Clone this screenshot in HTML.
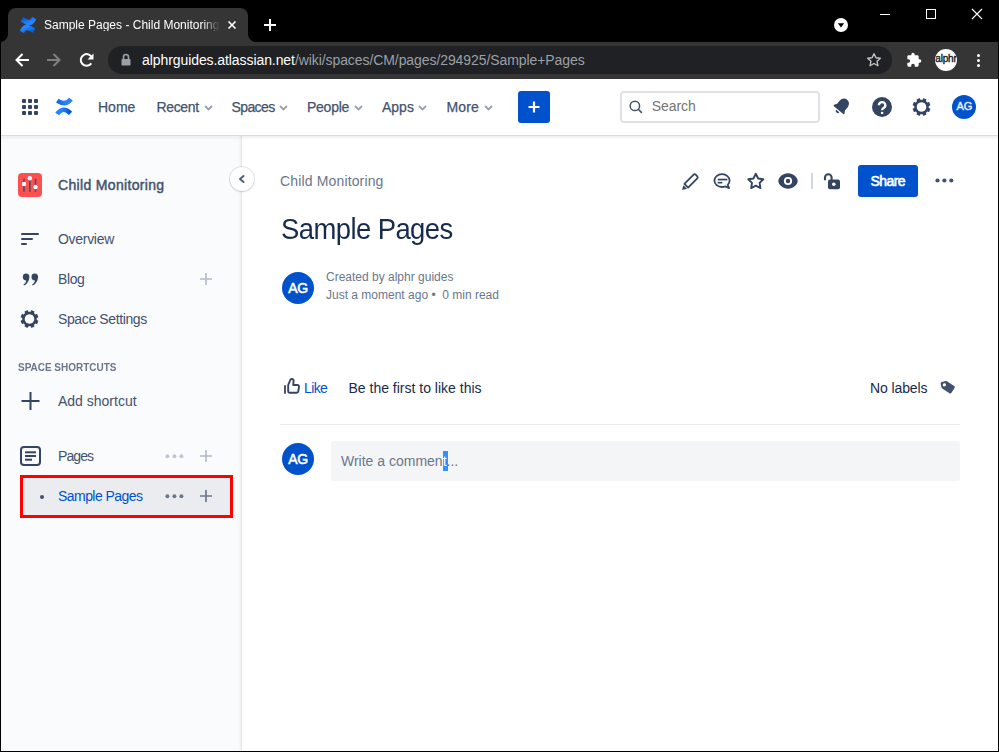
<!DOCTYPE html>
<html><head><meta charset="utf-8">
<style>
*{box-sizing:border-box}
html,body{margin:0;padding:0}
body{width:999px;height:752px;overflow:hidden;position:relative;background:#000;font-family:"Liberation Sans",sans-serif}
.a{position:absolute}
.t{position:absolute;line-height:1;white-space:nowrap}
svg{position:absolute;overflow:visible}
</style></head><body>
<!-- ===== Browser chrome ===== -->
<div class="a" style="left:0;top:0;width:999px;height:42px;background:#000"></div>
<!-- tab -->
<div class="a" style="left:8px;top:8px;width:240px;height:36px;background:#353535;border-radius:8px 8px 0 0"></div>
<svg style="left:0;top:34px" width="8" height="8"><path d="M0 8 A8 8 0 0 0 8 0 L8 8 Z" fill="#353535"/></svg>
<svg style="left:248px;top:34px" width="8" height="8"><path d="M0 0 A8 8 0 0 0 8 8 L0 8 Z" fill="#353535"/></svg>
<!-- favicon -->
<svg style="left:20px;top:17px" width="16" height="16" viewBox="5.1 6.2 21.8 19.6" preserveAspectRatio="none">
<defs><linearGradient x1="99.14%" x2="33.86%" y1="112.7%" y2="37.75%" id="lg1"><stop stop-color="#0052CC" offset="18%"/><stop stop-color="#2684FF" offset="100%"/></linearGradient>
<linearGradient x1="0.93%" x2="66.18%" y1="-12.58%" y2="62.31%" id="lg2"><stop stop-color="#0052CC" offset="18%"/><stop stop-color="#2684FF" offset="100%"/></linearGradient></defs>
<path id="cfl1" d="M5.9,21.2c-0.2,0.4-0.5,0.8-0.7,1.1c-0.2,0.3-0.1,0.7,0.2,0.9l4.4,2.7c0.3,0.2,0.7,0.1,0.9-0.2c0.2-0.3,0.4-0.7,0.7-1.1c1.8-2.9,3.5-2.6,6.7-1.1l4.4,2.1c0.3,0.2,0.7,0,0.9-0.3l2.1-4.8c0.1-0.3,0-0.7-0.3-0.9c-0.9-0.4-2.8-1.3-4.4-2.1C15,14.4,9.8,14.6,5.9,21.2z" fill="url(#lg1)"/>
<path id="cfl2" d="M26.1,10.8c0.2-0.4,0.5-0.8,0.7-1.1c0.2-0.3,0.1-0.7-0.2-0.9l-4.4-2.7c-0.3-0.2-0.7-0.1-0.9,0.2c-0.2,0.3-0.4,0.7-0.7,1.1c-1.8,2.9-3.5,2.6-6.7,1.1L9.5,6.4C9.2,6.3,8.8,6.4,8.6,6.7L6.5,11.5c-0.1,0.3,0,0.7,0.3,0.9c0.9,0.4,2.8,1.3,4.4,2.1C17,17.6,22.2,17.4,26.1,10.8z" fill="url(#lg2)"/>
</svg>
<div class="t" style="left:44px;top:19.1px;font-size:12px;color:#fff;width:176px;overflow:hidden;-webkit-mask-image:linear-gradient(to right,#000 158px,transparent 176px)">Sample Pages - Child Monitoring</div>
<svg style="left:228px;top:21px" width="8" height="8"><path d="M0.5 0.5L7.5 7.5M7.5 0.5L0.5 7.5" stroke="#fff" stroke-width="1.6"/></svg>
<svg style="left:264px;top:19px" width="12" height="12"><path d="M6 0V12M0 6H12" stroke="#fff" stroke-width="2"/></svg>
<!-- window controls -->
<svg style="left:834px;top:18px" width="14" height="14"><circle cx="7" cy="7" r="7" fill="#fff"/><path d="M3.8 5.3H10.2L7 9.5Z" fill="#000"/></svg>
<div class="a" style="left:880px;top:14px;width:10px;height:1px;background:#fff"></div>
<div class="a" style="left:926px;top:9px;width:10px;height:10px;border:1px solid #fff"></div>
<svg style="left:972px;top:9px" width="10" height="10"><path d="M0 0L10 10M10 0L0 10" stroke="#fff" stroke-width="1.1"/></svg>
<!-- toolbar -->
<div class="a" style="left:0;top:42px;width:999px;height:37px;background:#353535"></div>
<svg style="left:15px;top:53px" width="14" height="14"><path d="M7.5 1L1.5 7L7.5 13M1.5 7H14" stroke="#fff" stroke-width="2" fill="none"/></svg>
<svg style="left:47px;top:53px" width="14" height="14"><path d="M6.5 1L12.5 7L6.5 13M12.5 7H0" stroke="#7f7f7f" stroke-width="2" fill="none"/></svg>
<svg style="left:79px;top:52px" width="16" height="16"><path d="M13.2 6.5A5.8 5.8 0 1 0 12.3 11.3" stroke="#fff" stroke-width="2" fill="none"/><path d="M14.5 1.5V7.5H8.5Z" fill="#fff"/></svg>
<div class="a" style="left:108px;top:46px;width:784px;height:28px;background:#202124;border-radius:14px"></div>
<svg style="left:121px;top:53px" width="10" height="13"><path d="M2.5 6V4A2.5 2.5 0 0 1 7.5 4V6" stroke="#9aa0a6" stroke-width="1.6" fill="none"/><rect x="0.5" y="6" width="9" height="6.5" rx="0.8" fill="#9aa0a6"/></svg>
<div class="t" style="left:142px;top:52.65px;font-size:14px;color:#fff;letter-spacing:-0.08px">alphrguides.atlassian.net<span style="color:#9aa0a6">/wiki/spaces/CM/pages/294925/Sample+Pages</span></div>
<svg style="left:866px;top:52px" width="16" height="16" viewBox="0 0 24 24"><path d="M12 2.5l2.9 6.1 6.6.8-4.9 4.6 1.3 6.6L12 17.3l-5.9 3.3 1.3-6.6-4.9-4.6 6.6-.8z" stroke="#c4c7c5" stroke-width="2" fill="none" stroke-linejoin="round"/></svg>
<svg style="left:906px;top:52px" width="16" height="16" viewBox="0 0 24 24"><path d="M20.5 11H19V7c0-1.1-.9-2-2-2h-4V3.5a2.5 2.5 0 0 0-5 0V5H4c-1.1 0-2 .9-2 2v3.8h1.5a2.7 2.7 0 0 1 0 5.4H2V20c0 1.1.9 2 2 2h3.8v-1.5a2.7 2.7 0 0 1 5.4 0V22H17c1.1 0 2-.9 2-2v-4h1.5a2.5 2.5 0 0 0 0-5z" fill="#fff"/></svg>
<div class="a" style="left:935px;top:49px;width:22px;height:22px;border-radius:50%;background:#fff;overflow:hidden"><div class="t" style="left:0.3px;top:4.8px;font-size:10px;font-weight:400;color:#222;letter-spacing:-0.2px;-webkit-text-stroke:0.4px #222">alphr</div></div>
<div class="a" style="left:977px;top:54px;width:3px;height:3px;border-radius:50%;background:#fff"></div>
<div class="a" style="left:977px;top:59px;width:3px;height:3px;border-radius:50%;background:#fff"></div>
<div class="a" style="left:977px;top:64px;width:3px;height:3px;border-radius:50%;background:#fff"></div>

<!-- ===== Page ===== -->
<div class="a" style="left:1px;top:79px;width:997px;height:672px;background:#fff"></div>
<!-- top nav -->

<svg style="left:22px;top:99px" width="16" height="16">
<g fill="#344563"><rect x="0" y="0" width="4" height="4" rx="1"/><rect x="6" y="0" width="4" height="4" rx="1"/><rect x="12" y="0" width="4" height="4" rx="1"/>
<rect x="0" y="6" width="4" height="4" rx="1"/><rect x="6" y="6" width="4" height="4" rx="1"/><rect x="12" y="6" width="4" height="4" rx="1"/>
<rect x="0" y="12" width="4" height="4" rx="1"/><rect x="6" y="12" width="4" height="4" rx="1"/><rect x="12" y="12" width="4" height="4" rx="1"/></g></svg>
<svg style="left:50px;top:92px" width="30" height="30" viewBox="0 0 30 30"><defs><linearGradient id="ng1" gradientUnits="userSpaceOnUse" x1="6" y1="9" x2="21" y2="8"><stop offset="0" stop-color="#0c5fd8"/><stop offset="0.6" stop-color="#2684ff"/><stop offset="1" stop-color="#2a82f8"/></linearGradient><linearGradient id="ng2" gradientUnits="userSpaceOnUse" x1="21" y1="21" x2="6" y2="21"><stop offset="0" stop-color="#0052cc"/><stop offset="0.6" stop-color="#2684ff"/><stop offset="1" stop-color="#2684ff"/></linearGradient></defs>
<path d="M7.3 8.7Q15.5 14.3 21 7.2" stroke="url(#ng1)" stroke-width="4.5" fill="none"/>
<path d="M7.1 22Q13 13.9 20.5 21.3" stroke="url(#ng2)" stroke-width="4.6" fill="none"/></svg>
<div class="t" style="left:98px;top:100.35px;font-size:14px;color:#42526e;-webkit-text-stroke:0.25px #42526e">Home</div>
<div class="t" style="left:156.5px;top:100.35px;font-size:14px;color:#42526e;letter-spacing:-0.35px;-webkit-text-stroke:0.25px #42526e">Recent</div>
<div class="t" style="left:231.5px;top:100.35px;font-size:14px;color:#42526e;letter-spacing:-0.6px;-webkit-text-stroke:0.25px #42526e">Spaces</div>
<div class="t" style="left:307px;top:100.35px;font-size:14px;color:#42526e;letter-spacing:-0.25px;-webkit-text-stroke:0.25px #42526e">People</div>
<div class="t" style="left:382px;top:100.35px;font-size:14px;color:#42526e;-webkit-text-stroke:0.25px #42526e">Apps</div>
<div class="t" style="left:446.5px;top:100.35px;font-size:14px;color:#42526e;letter-spacing:0.15px;-webkit-text-stroke:0.25px #42526e">More</div>
<svg style="left:203.5px;top:104.6px" width="9" height="6"><path d="M1 1L4.5 4.5L8 1" stroke="#97a0af" stroke-width="1.8" fill="none"/></svg>
<svg style="left:278.5px;top:104.6px" width="9" height="6"><path d="M1 1L4.5 4.5L8 1" stroke="#97a0af" stroke-width="1.8" fill="none"/></svg>
<svg style="left:353.5px;top:104.6px" width="9" height="6"><path d="M1 1L4.5 4.5L8 1" stroke="#97a0af" stroke-width="1.8" fill="none"/></svg>
<svg style="left:417.5px;top:104.6px" width="9" height="6"><path d="M1 1L4.5 4.5L8 1" stroke="#97a0af" stroke-width="1.8" fill="none"/></svg>
<svg style="left:483.5px;top:104.6px" width="9" height="6"><path d="M1 1L4.5 4.5L8 1" stroke="#97a0af" stroke-width="1.8" fill="none"/></svg>
<div class="a" style="left:518px;top:91px;width:32px;height:32px;background:#0052cc;border-radius:3px"></div>
<svg style="left:528px;top:101px" width="12" height="12"><path d="M6 0.5V11.5M0.5 6H11.5" stroke="#fff" stroke-width="2.2"/></svg>
<div class="a" style="left:620px;top:91px;width:200px;height:32px;border:2px solid #dfe1e6;border-radius:4px;background:#fff"></div>
<svg style="left:629px;top:100px" width="14" height="14"><circle cx="5.9" cy="5.9" r="4.7" stroke="#42526e" stroke-width="1.5" fill="none"/><path d="M9.3 9.3L12.4 12.4" stroke="#42526e" stroke-width="1.6" stroke-linecap="round"/></svg>
<div class="t" style="left:651.7px;top:99.15px;font-size:14px;color:#757575;letter-spacing:-0.05px">Search</div>
<svg style="left:830.5px;top:95px" width="22" height="22" viewBox="0 0 24 24"><g transform="rotate(40 12 12)"><path d="M12 3.2c-3.3 0-5.6 2.6-5.6 5.8v4.6L4.6 16.6c-.4.6 0 1.2.7 1.2h13.4c.7 0 1.1-.6.7-1.2l-1.8-3V9c0-3.2-2.3-5.8-5.6-5.8z" fill="#344563"/><path d="M9.8 19.2a2.2 2.2 0 0 0 4.4 0z" fill="#344563"/></g></svg>
<svg style="left:872px;top:97px" width="20" height="20"><circle cx="10" cy="10" r="10" fill="#344563"/><path d="M6.9 8.3A3.2 3.2 0 1 1 11.6 11.1C10.6 11.7 10.1 12.1 10.1 13.3" stroke="#fff" stroke-width="2.3" fill="none"/><rect x="8.95" y="14.9" width="2.3" height="2.1" fill="#fff"/></svg>
<svg style="left:912.2px;top:97.5px" width="19" height="18" viewBox="-9.5 -9 19 18"><g fill="#344563"><rect x="-1.8" y="-9" width="3.6" height="4" rx="0.6" transform="rotate(22.5)"/><rect x="-1.8" y="-9" width="3.6" height="4" rx="0.6" transform="rotate(67.5)"/><rect x="-1.8" y="-9" width="3.6" height="4" rx="0.6" transform="rotate(112.5)"/><rect x="-1.8" y="-9" width="3.6" height="4" rx="0.6" transform="rotate(157.5)"/><rect x="-1.8" y="-9" width="3.6" height="4" rx="0.6" transform="rotate(202.5)"/><rect x="-1.8" y="-9" width="3.6" height="4" rx="0.6" transform="rotate(247.5)"/><rect x="-1.8" y="-9" width="3.6" height="4" rx="0.6" transform="rotate(292.5)"/><rect x="-1.8" y="-9" width="3.6" height="4" rx="0.6" transform="rotate(337.5)"/></g><circle r="6.1" stroke="#344563" stroke-width="2.5" fill="none"/></svg>
<div class="a" style="left:952px;top:95px;width:24px;height:24px;border-radius:50%;background:#0052cc"></div>
<div class="t" style="left:956.5px;top:101.4px;font-size:11px;color:#e6eeff;letter-spacing:-0.1px;-webkit-text-stroke:0.45px #e6eeff">AG</div>

<!-- sidebar -->
<div class="a" style="left:1px;top:137px;width:240px;height:614px;background:#fafbfc"></div>
<div class="a" style="left:238px;top:135px;width:3px;height:616px;background:linear-gradient(to right,rgba(0,0,0,0),rgba(0,0,0,0.035))"></div>
<div class="a" style="left:241px;top:135px;width:1px;height:616px;background:#e4e4e6"></div>
<div class="a" style="left:1px;top:135px;width:997px;height:1px;background:#dadde2"></div>
<div class="a" style="left:1px;top:136px;width:997px;height:4px;background:linear-gradient(rgba(9,30,66,0.07),rgba(9,30,66,0))"></div>
<div class="a" style="left:230px;top:166.5px;width:24px;height:24px;border-radius:50%;background:#fff;box-shadow:0 0 0 1px rgba(9,30,66,0.10),0 1px 2px rgba(9,30,66,0.12)"></div>
<svg style="left:238px;top:175px" width="7" height="8"><path d="M5.5 1L2 4L5.5 7" stroke="#505f79" stroke-width="2" fill="none" stroke-linejoin="round" stroke-linecap="round"/></svg>

<div class="a" style="left:18px;top:173px;width:24px;height:24px;border-radius:4px;background:#ff5050"></div>
<svg style="left:18px;top:173px" width="24" height="24"><g stroke="#42526e" stroke-width="1.6" stroke-linecap="round"><path d="M6 6.3V18.3M11.8 5V18.3M17.5 6.3V18.3"/></g><g fill="#fff"><circle cx="6" cy="11" r="2.2"/><circle cx="11.8" cy="5.2" r="2.2"/><circle cx="17.5" cy="14" r="2.2"/></g></svg>
<div class="t" style="left:58px;top:177.85px;font-size:14px;font-weight:400;color:#42526e;letter-spacing:0.33px;-webkit-text-stroke:0.45px #42526e">Child Monitoring</div>

<svg style="left:21px;top:232px" width="18" height="14"><g fill="#344563"><rect x="0" y="1" width="18" height="1.9" rx="0.9"/><rect x="0" y="6.1" width="12" height="1.9" rx="0.9"/><rect x="0" y="11.1" width="6" height="1.9" rx="0.9"/></g></svg>
<div class="t" style="left:58px;top:231.95px;font-size:14px;color:#42526e;letter-spacing:-0.3px">Overview</div>
<svg style="left:22.8px;top:272.8px" width="15.5" height="13.2" viewBox="0 0 17 14"><path d="M3.6 0.4a3.3 3.3 0 0 1 3.4 3.6c0 4.2-2.6 8.3-5.9 9.6l-.6-1.3c1.7-1 2.9-2.5 3.1-4.3A3.1 3.1 0 1 1 3.6 .4zM13.1 0.4a3.3 3.3 0 0 1 3.4 3.6c0 4.2-2.6 8.3-5.9 9.6l-.6-1.3c1.7-1 2.9-2.5 3.1-4.3a3.1 3.1 0 1 1 0-7.6z" fill="#344563"/></svg>
<div class="t" style="left:58px;top:272.05px;font-size:14px;color:#42526e;letter-spacing:-0.4px">Blog</div>
<svg style="left:200px;top:273px" width="12" height="12"><path d="M6 0V12M0 6H12" stroke="#b3bac5" stroke-width="1.6"/></svg>
<svg style="left:20.1px;top:309.5px" width="19" height="18" viewBox="-9.5 -9 19 18"><g fill="#344563"><rect x="-1.8" y="-9" width="3.6" height="4" rx="0.6" transform="rotate(22.5)"/><rect x="-1.8" y="-9" width="3.6" height="4" rx="0.6" transform="rotate(67.5)"/><rect x="-1.8" y="-9" width="3.6" height="4" rx="0.6" transform="rotate(112.5)"/><rect x="-1.8" y="-9" width="3.6" height="4" rx="0.6" transform="rotate(157.5)"/><rect x="-1.8" y="-9" width="3.6" height="4" rx="0.6" transform="rotate(202.5)"/><rect x="-1.8" y="-9" width="3.6" height="4" rx="0.6" transform="rotate(247.5)"/><rect x="-1.8" y="-9" width="3.6" height="4" rx="0.6" transform="rotate(292.5)"/><rect x="-1.8" y="-9" width="3.6" height="4" rx="0.6" transform="rotate(337.5)"/></g><circle r="6.1" stroke="#344563" stroke-width="2.5" fill="none"/></svg>
<div class="t" style="left:58px;top:311.65px;font-size:14px;color:#42526e;letter-spacing:-0.38px">Space Settings</div>

<div class="t" style="left:18px;top:362.2px;font-size:11px;font-weight:700;color:#6b778c;transform:scaleX(0.906);transform-origin:0 0">SPACE SHORTCUTS</div>
<svg style="left:20.5px;top:392px" width="19" height="18"><path d="M9.5 0V18M0.5 9H18.5" stroke="#344563" stroke-width="2"/></svg>
<div class="t" style="left:58px;top:394.45px;font-size:14px;color:#42526e">Add shortcut</div>

<svg style="left:20px;top:446px" width="21" height="20"><rect x="1" y="1" width="19" height="18" rx="3" stroke="#344563" stroke-width="2" fill="none"/><g fill="#344563"><rect x="5" y="5.3" width="11" height="2"/><rect x="5" y="9" width="11" height="2"/><rect x="5" y="12.7" width="7" height="2"/></g></svg>
<div class="t" style="left:58px;top:448.95px;font-size:14px;color:#42526e;letter-spacing:-0.9px">Pages</div>
<svg style="left:164.5px;top:453.5px" width="20" height="5"><g fill="#c1c7d0"><circle cx="2.4" cy="2.3" r="2"/><circle cx="9.4" cy="2.3" r="2"/><circle cx="16.4" cy="2.3" r="2"/></g></svg>
<svg style="left:200px;top:450px" width="12" height="12"><path d="M6 0V12M0 6H12" stroke="#b3bac5" stroke-width="1.6"/></svg>

<div class="a" style="left:20px;top:475px;width:213px;height:43px;border:3px solid #ff0000;background:#ebecf0"></div>
<div class="a" style="left:40.2px;top:494.7px;width:4px;height:4px;border-radius:50%;background:#42526e"></div>
<div class="t" style="left:58px;top:489.25px;font-size:14px;color:#0052cc;letter-spacing:-0.55px">Sample Pages</div>
<svg style="left:164.5px;top:493.6px" width="20" height="5"><g fill="#6b778c"><circle cx="2.4" cy="2.3" r="2"/><circle cx="9.4" cy="2.3" r="2"/><circle cx="16.4" cy="2.3" r="2"/></g></svg>
<svg style="left:200px;top:490px" width="12" height="12"><path d="M6 0V12M0 6H12" stroke="#6b778c" stroke-width="1.7"/></svg>

<!-- content -->
<div class="t" style="left:280px;top:174.15px;font-size:14px;color:#6b778c;letter-spacing:0.15px">Child Monitoring</div>
<div class="t" style="left:280.5px;top:214.9px;font-size:29px;color:#172b4d;letter-spacing:-0.6px;transform:scaleX(0.946);transform-origin:0 0">Sample Pages</div>
<div class="a" style="left:282px;top:271.5px;width:32px;height:32px;border-radius:50%;background:#0052cc"></div>
<div class="t" style="left:288.3px;top:280.8px;font-size:14px;color:#fff;letter-spacing:-0.5px;-webkit-text-stroke:0.55px #fff">AG</div>
<div class="t" style="left:326px;top:271.04px;font-size:12px;color:#6b778c">Created by alphr guides</div>
<div class="t" style="left:326px;top:289.04px;font-size:12px;color:#6b778c">Just a moment ago •&nbsp; 0 min read</div>

<svg style="left:681px;top:172.8px" width="18" height="18" viewBox="0 0 18 18"><path d="M12.6 1.7a1.5 1.5 0 0 1 2.1 0l1.6 1.6a1.5 1.5 0 0 1 0 2.1L7.1 14.6 3.4 10.9z" stroke="#344563" stroke-width="1.8" fill="none" stroke-linejoin="round"/><path d="M2.4 12.2L6 15.8 1 17z" fill="#344563"/></svg>
<svg style="left:712.5px;top:172.5px" width="19" height="17" viewBox="0 0 19 17"><path d="M9 1.2c4.3 0 7.6 2.9 7.6 6.4 0 1.6-.7 3.1-1.9 4.2l1.4 3.4-3.9-1.8c-1 .4-2.1.6-3.2.6-4.3 0-7.6-2.9-7.6-6.4S4.7 1.2 9 1.2z" stroke="#344563" stroke-width="1.8" fill="none" stroke-linejoin="round"/><rect x="4.7" y="5.7" width="9.7" height="1.7" fill="#344563"/><rect x="4.7" y="8.8" width="4.6" height="1.7" fill="#344563"/></svg>
<svg style="left:742px;top:168px" width="28" height="26"><polygon points="13.80,5.80 16.15,10.46 21.31,11.26 17.60,14.94 18.44,20.09 13.80,17.70 9.16,20.09 10.00,14.94 6.29,11.26 11.45,10.46" stroke="#344563" stroke-width="1.9" fill="none" stroke-linejoin="round"/></svg>
<svg style="left:778px;top:172.8px" width="20" height="16" viewBox="0 0 20 16"><path d="M10 0.3C4.8 0.3 0.3 4.6 0.3 8S4.8 15.7 10 15.7 19.7 11.4 19.7 8 15.2 0.3 10 0.3z" fill="#344563"/><circle cx="10" cy="8" r="4.1" fill="#fff"/><circle cx="10" cy="8" r="2.2" fill="#344563"/></svg>
<div class="a" style="left:811px;top:173px;width:2px;height:16px;background:#d3d7de"></div>
<svg style="left:823px;top:172.5px" width="18" height="17" viewBox="0 0 18 17"><path d="M2 7.3V4.6a3.3 3.3 0 0 1 6.6 0V7" stroke="#344563" stroke-width="2.1" fill="none"/><rect x="5" y="6.5" width="12" height="9.8" rx="2" fill="#344563"/><circle cx="10.8" cy="11.2" r="1.8" fill="#fff"/></svg>
<div class="a" style="left:858px;top:165px;width:60px;height:32px;border-radius:3px;background:#0052cc"></div>
<div class="t" style="left:870.6px;top:174px;font-size:14px;font-weight:400;color:#fff;letter-spacing:-0.6px;-webkit-text-stroke:0.6px #fff">Share</div>
<svg style="left:934.5px;top:178.4px" width="20" height="5"><g fill="#42526e"><circle cx="2.5" cy="2.5" r="2.1"/><circle cx="9.4" cy="2.5" r="2.1"/><circle cx="16.3" cy="2.5" r="2.1"/></g></svg>

<svg style="left:278px;top:372px" width="30" height="28" viewBox="0 0 30 28"><path d="M7 13.8V21" stroke="#344563" stroke-width="1.8" stroke-linecap="round"/><path d="M10.2 13L12 8.6Q12.4 7 13.9 7Q15.8 7 15.6 9.2L15.2 13L19.3 13Q21.3 13 21 15L20.3 19.2Q20 20.7 18.4 20.7L11.8 20.7Q10.2 20.7 10.2 19.2Z" stroke="#344563" stroke-width="1.9" fill="none" stroke-linejoin="round"/></svg>
<div class="t" style="left:304px;top:380.85px;font-size:14px;color:#0052cc;letter-spacing:-0.6px">Like</div>
<div class="t" style="left:348.5px;top:380.85px;font-size:14px;color:#172b4d">Be the first to like this</div>
<div class="t" style="left:870px;top:381.25px;font-size:14px;color:#172b4d;letter-spacing:-0.1px">No labels</div>
<svg style="left:940px;top:379px" width="16" height="16" viewBox="0 0 16 16"><g transform="rotate(-12 8 8)"><path d="M1.5 3.2V7.2c0 .4.2.8.5 1.1l6.1 6.1c.6.6 1.5.6 2.1 0l4-4c.6-.6.6-1.5 0-2.1L8.1 2.2c-.3-.3-.7-.5-1.1-.5H3c-.8 0-1.5.7-1.5 1.5z" fill="#42526e"/><circle cx="4.9" cy="5.1" r="1.6" fill="#fff"/></g></svg>
<div class="a" style="left:280px;top:424px;width:680px;height:1px;background:#ebecf0"></div>

<div class="a" style="left:282px;top:443px;width:32px;height:32px;border-radius:50%;background:#0052cc"></div>
<div class="t" style="left:288.3px;top:452.3px;font-size:14px;color:#fff;letter-spacing:-0.5px;-webkit-text-stroke:0.55px #fff">AG</div>
<div class="a" style="left:331px;top:441px;width:629px;height:40px;border-radius:3px;background:#f4f5f7"></div>
<div class="a" style="left:443px;top:451px;width:5px;height:20px;background:#3390ff"></div>
<div class="t" style="left:341px;top:454.15px;font-size:14px;color:#6b778c">Write a commen<span style="color:#fff">t</span>...</div>

<!-- window border -->
<div class="a" style="left:0;top:42px;width:1px;height:710px;background:#000"></div>
<div class="a" style="left:998px;top:42px;width:1px;height:710px;background:#000"></div>
<div class="a" style="left:0;top:751px;width:999px;height:1px;background:#000"></div>

</body></html>
